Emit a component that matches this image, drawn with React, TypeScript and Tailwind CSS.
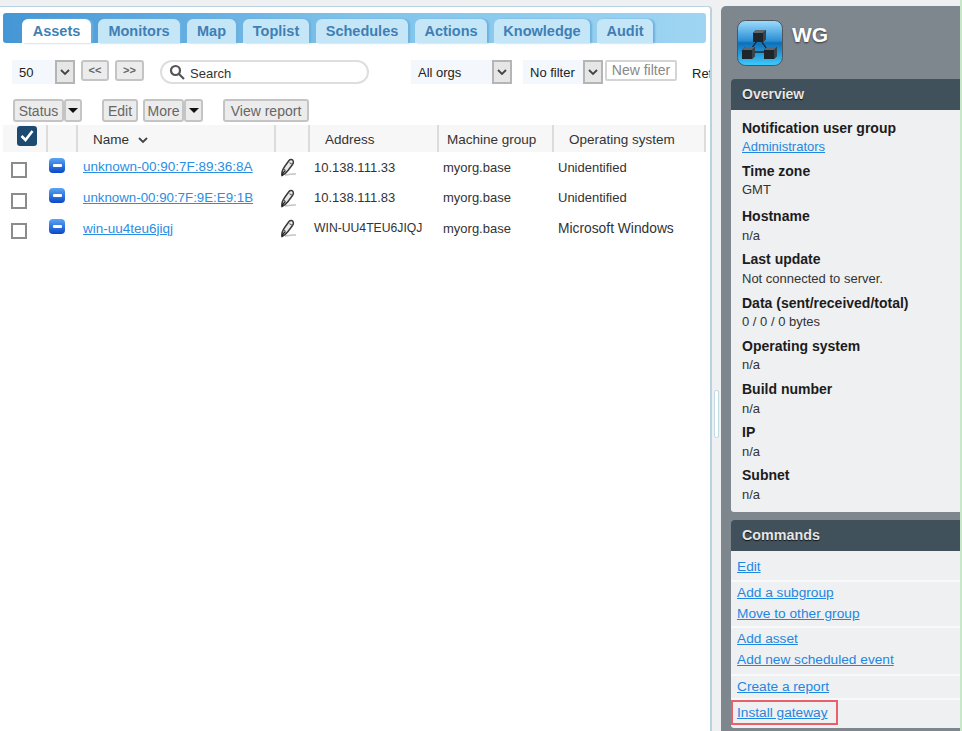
import React from "react";

const tabs = [
  { label: "Assets", w: "w-[69px]", active: true },
  { label: "Monitors", w: "w-[82px]" },
  { label: "Map", w: "w-[49px]" },
  { label: "Toplist", w: "w-[66px]" },
  { label: "Schedules", w: "w-[92px]" },
  { label: "Actions", w: "w-[72px]" },
  { label: "Knowledge", w: "w-[96px]" },
  { label: "Audit", w: "w-[56px]" },
];

const assets = [
  { name: "unknown-00:90:7F:89:36:8A", nameSize: "text-[13.500px]", address: "10.138.111.33", addrSize: "text-[13px]", os: "Unidentified", osSize: "text-[13px]", rowH: "h-[31px]" },
  { name: "unknown-00:90:7F:9E:E9:1B", nameSize: "text-[13.300px]", address: "10.138.111.83", addrSize: "text-[13px]", os: "Unidentified", osSize: "text-[13px]", rowH: "h-[30px]" },
  { name: "win-uu4teu6jiqj", nameSize: "text-[13.500px] pt-px", address: "WIN-UU4TEU6JIQJ", addrSize: "text-[12.200px]", os: "Microsoft Windows", osSize: "text-[13.800px] pt-px", rowH: "h-[31px]" },
];

const fields = [
  { label: "Notification user group", value: "Administrators", link: true, mt: "mt-[9px]", vm: "mt-px" },
  { label: "Time zone", value: "GMT", mt: "mt-[6px]", vm: "mt-px" },
  { label: "Hostname", value: "n/a", mt: "mt-[8px]", vm: "mt-[2px]" },
  { label: "Last update", value: "Not connected to server.", mt: "mt-[5px]", vm: "mt-[2px]" },
  { label: "Data (sent/received/total)", value: "0 / 0 / 0 bytes", mt: "mt-[6px]", vm: "mt-px" },
  { label: "Operating system", value: "n/a", mt: "mt-[6px]", vm: "mt-px" },
  { label: "Build number", value: "n/a", mt: "mt-[6px]", vm: "mt-[2px]" },
  { label: "IP", value: "n/a", mt: "mt-[5px]", vm: "mt-[2px]" },
  { label: "Subnet", value: "n/a", mt: "mt-[5px]", vm: "mt-[2px]" },
];

const Chevron = () => (
  <svg width="10" height="7" viewBox="0 0 10 7" fill="none" stroke="#444" strokeWidth="1.8">
    <path d="M1 1l4 4 4-4" />
  </svg>
);

const Caret = () => (
  <svg width="10" height="5" viewBox="0 0 10 5" fill="#111">
    <path d="M0 0h10L5 5z" />
  </svg>
);

const Pencil = () => (
  <svg width="17" height="19" viewBox="0 0 17 19" fill="none">
    <path d="M5 17c3-.5 6-1.500 11-1" stroke="#c4c4c4" strokeWidth="1.500" />
    <path d="M2 17.500c-.8-3 .5-6 3-9.500l4-5.500c1.200-1.500 3.600-1.200 4.200.4.500 1.300.2 2.300-.7 3.600L8 12.500c-1.500 2-3.500 4-6 5z" fill="#e9e9e9" stroke="#3a3a3a" strokeWidth="1.500" />
    <path d="M9.500 4.500c.8 1 1.800 1.600 3 1.700M3.500 11c1 .3 1.800 1 2 2.300" stroke="#555" strokeWidth="1.100" />
    <path d="M2 17.500c.5-2 1.500-3.500 3-4.500" stroke="#222" strokeWidth="1.500" />
  </svg>
);

const StatusIcon = () => (
  <div className="flex h-[15px] w-[16px] items-center justify-center rounded-[4px] bg-gradient-to-b from-[#5aa5f5] to-[#0c47c8]">
    <div className="h-[3px] w-[9px] rounded-[1px] bg-white" />
  </div>
);

const Cube = ({ x, y }: { x: number; y: number }) => (
  <g transform={`translate(${x} ${y})`}>
    <path d="M0 3l3-3h10v9l-3 3H0z" fill="#1f262b" />
    <path d="M0 3l3-3h10l-3 3z" fill="#5d666c" />
    <path d="M10 3l3-3v9l-3 3z" fill="#3a4349" />
  </g>
);

const NetworkIcon = () => (
  <svg width="46" height="46" viewBox="0 0 46 46">
    <defs>
      <linearGradient id="tile" x1="0" y1="0" x2="0" y2="1">
        <stop offset="0" stopColor="#9fdcfd" />
        <stop offset="0.45" stopColor="#2a8fd6" />
        <stop offset="0.5" stopColor="#0f6fb8" />
        <stop offset="1" stopColor="#3fcbfc" />
      </linearGradient>
    </defs>
    <rect x="0.500" y="0.500" width="45" height="45" rx="8" fill="url(#tile)" stroke="#4d555b" />
    <path d="M22 18L12 32h20z" fill="none" stroke="#1d2a33" strokeWidth="1.300" />
    <Cube x={16} y={10} />
    <Cube x={5} y={27} />
    <Cube x={27} y={27} />
  </svg>
);

const Btn = ({ children, className = "" }: { children: React.ReactNode; className?: string }) => (
  <div className={`flex items-center justify-center rounded-[3px] border-2 border-[#c4c4c4] bg-[#ececec] text-[#666] ${className}`}>
    {children}
  </div>
);

const Select = ({ label, inputW }: { label: string; inputW: string }) => (
  <div className="flex h-[24px] bg-[#f4f8fc]">
    <div className={`${inputW} flex items-center pl-[7px] pt-px text-[13px] text-[#222]`}>{label}</div>
    <div className="flex w-[20px] items-center justify-center border-2 border-[#b5b5b5] bg-[#e6e6e6]">
      <Chevron />
    </div>
  </div>
);

const Head = ({ w, label, pl, sep = true, children }: { w: string; label?: string; pl?: string; sep?: boolean; children?: React.ReactNode }) => (
  <div className={`${w} ${pl ?? ""} flex h-full shrink-0 items-center pt-[3px] text-[13.500px] text-[#333] ${sep ? "border-r-2 border-[#dcdcdc]" : ""}`}>
    {label}
    {children}
  </div>
);

const CmdLink = ({ children }: { children: React.ReactNode }) => (
  <a className="block text-[13.700px] leading-[21px] text-[#1f87e0] underline">{children}</a>
);

export default function App() {
  return (
    <div className="flex h-[731px] w-[962px] overflow-hidden bg-[#eef0f1] font-['Liberation_Sans',Arial,sans-serif]">
      {/* Left pane */}
      <div className="mt-[6px] h-[725px] w-[712px] shrink-0 overflow-hidden rounded-tr-[4px] border-t border-r-2 border-[#b9d3e0] bg-white">
        <div className="ml-[3px] mt-[6px] flex h-[30px] w-[703px] items-end rounded-[3px] bg-gradient-to-r from-[#4596d6] via-[#7fc3ea] to-[#9ed5f2] pl-[19px]">
          <div className="flex gap-[7px]">
            {tabs.map((t) => (
              <div
                key={t.label}
                className={`${t.w} flex h-[24px] items-center justify-center rounded-t-[6px] pt-px text-[14.500px] font-bold text-[#3f7fb5] shadow-[2px_0_2px_#6bb0de] ${
                  t.active ? "bg-white" : "bg-[#c5e6f7]"
                }`}
              >
                {t.label}
              </div>
            ))}
          </div>
        </div>

        {/* Filter toolbar */}
        <div className="ml-[12px] mt-[17px] flex h-[24px] w-max items-start">
          <Select label="50" inputW="w-[43px]" />
          <Btn className="ml-[6px] h-[21px] w-[28px] text-[11px] font-bold">&lt;&lt;</Btn>
          <Btn className="ml-[6px] h-[21px] w-[29px] text-[11px] font-bold">&gt;&gt;</Btn>
          <div className="ml-[16px] flex h-[24px] w-[209px] items-center gap-[5px] rounded-full border-2 border-[#dedede] pl-[7px] text-[13px] text-[#333]">
            <svg width="16" height="16" viewBox="0 0 16 16" fill="none" stroke="#555" strokeWidth="2.2">
              <circle cx="6.500" cy="6.500" r="4.500" />
              <path d="M10 10l5 5" />
            </svg>
            <span className="pt-[3px]">Search</span>
          </div>
          <div className="ml-[42px]">
            <Select label="All orgs" inputW="w-[81px]" />
          </div>
          <div className="ml-[11px]">
            <Select label="No filter" inputW="w-[60px]" />
          </div>
          <div className="ml-[2px] flex h-[21px] w-[72px] items-center justify-center rounded-[2px] border-2 border-[#d4d4d4] text-[14px] text-[#888]">
            New filter
          </div>
          <div className="ml-[15px] text-[13px] leading-[28px] text-[#222]">Refresh</div>
        </div>

        {/* Actions toolbar */}
        <div className="ml-[13px] mt-[15px] flex h-[23px] w-max items-center text-[14px]">
          <Btn className="h-full w-[51px] pt-px">Status</Btn>
          <Btn className="h-full w-[18px]"><Caret /></Btn>
          <Btn className="ml-[20px] h-full w-[36px] pt-px">Edit</Btn>
          <Btn className="ml-[5px] h-full w-[41px] pt-px">More</Btn>
          <Btn className="h-full w-[19px]"><Caret /></Btn>
          <Btn className="ml-[20px] h-full w-[86px] pt-px">View report</Btn>
        </div>

        {/* Asset table */}
        <div className="ml-[3px] mt-[3px] flex h-[27px] w-[703px] items-center bg-[#f7f7f7]">
          <Head w="w-[43px]" sep={false} pl="pl-[14px]">
            <div className="mb-[9px] flex h-[20px] w-[20px] items-center justify-center rounded-[3px] bg-[#1d4a70]">
              <svg width="14" height="12" viewBox="0 0 14 12" fill="none" stroke="#fff" strokeWidth="2.600">
                <path d="M1.500 6l4 4 7-9" />
              </svg>
            </div>
          </Head>
          <Head w="w-[32px] border-l-2" />
          <Head w="w-[198px]" pl="pl-[15px]">
            Name
            <span className="ml-[9px]">
              <Chevron />
            </span>
          </Head>
          <Head w="w-[34px]" />
          <Head w="w-[129px]" label="Address" pl="pl-[15px]" />
          <Head w="w-[115px]" label="Machine group" pl="pl-[8px]" />
          <Head w="w-[152px]" label="Operating system" pl="pl-[15px]" />
        </div>
        {assets.map((a) => (
          <div key={a.name} className={`${a.rowH} ml-[3px] flex items-center text-[13px] text-[#333]`}>
            <div className="w-[43px] shrink-0 pl-[8px] pt-[5px]">
              <div className="h-[16px] w-[16px] border-2 border-[#8c8c8c]" />
            </div>
            <div className="w-[32px] shrink-0 pb-[5px] pl-[3px]">
              <StatusIcon />
            </div>
            <a className={`${a.nameSize} w-[197px] shrink-0 pl-[5px] text-[#2b8ee3] underline`}>{a.name}</a>
            <div className="w-[33px] shrink-0 pl-[5px]">
              <Pencil />
            </div>
            <div className={`${a.addrSize} w-[132px] shrink-0 pl-[6px]`}>{a.address}</div>
            <div className="w-[115px] shrink-0 pl-[3px]">myorg.base</div>
            <div className={`${a.osSize} pl-[3px]`}>{a.os}</div>
          </div>
        ))}
      </div>

      {/* Splitter */}
      <div className="w-[9px] shrink-0 pl-[2px] pt-[390px]">
        <div className="h-[48px] w-[5px] rounded-[2px] border border-[#c4dbe6] bg-white" />
      </div>

      {/* Right pane */}
      <div className="mt-[6px] h-[725px] w-[239px] shrink-0 overflow-hidden rounded-tl-[5px] bg-[#7f878e] pl-[10px]">
        <div className="flex h-[73px] pl-[6px] pt-[14px]">
          <NetworkIcon />
          <div className="ml-[9px] mt-[3px] text-[21px] leading-[24px] font-bold text-white [text-shadow:0_1px_2px_#333]">WG</div>
        </div>
        <div className="flex h-[31px] items-center rounded-tl-[4px] bg-[#41515c] pl-[11px] text-[14px] font-bold text-[#e6e6e6] [text-shadow:0_1px_1px_#111]">
          Overview
        </div>
        <div className="flow-root h-[402px] rounded-bl-[3px] bg-[#eef0f2] pl-[11px]">
          {fields.map((f) => (
            <div key={f.label} className={f.mt}>
              <div className="text-[14px] leading-[18px] font-bold text-[#1c1c1c]">{f.label}</div>
              {f.link ? (
                <a className={`${f.vm} block text-[13px] leading-[18px] text-[#1f87e0] underline`}>{f.value}</a>
              ) : (
                <div className={`${f.vm} text-[13px] leading-[18px] text-[#333]`}>{f.value}</div>
              )}
            </div>
          ))}
        </div>
        <div className="mt-[8px] flex h-[31px] items-center rounded-tl-[4px] bg-[#41515c] pl-[11px] text-[14.300px] font-bold text-[#e6e6e6] [text-shadow:0_1px_1px_#111]">
          Commands
        </div>
        <div className="h-[177px] rounded-bl-[3px] bg-[#eef0f2]">
          <div className="border-b-2 border-[#f8f9fa] pb-[3px] pl-[6px] pt-[5px]">
            <CmdLink>Edit</CmdLink>
          </div>
          <div className="border-b-2 border-[#f8f9fa] pb-[2px] pl-[6px]">
            <CmdLink>Add a subgroup</CmdLink>
            <CmdLink>Move to other group</CmdLink>
          </div>
          <div className="border-b-2 border-[#f8f9fa] pb-[4px] pl-[6px]">
            <CmdLink>Add asset</CmdLink>
            <CmdLink>Add new scheduled event</CmdLink>
          </div>
          <div className="border-b-2 border-[#f8f9fa] pb-px pl-[6px]">
            <CmdLink>Create a report</CmdLink>
          </div>
          <div className="w-[107px] border-2 border-[#e8606a] pl-[4px]">
            <CmdLink>Install gateway</CmdLink>
          </div>
        </div>
      </div>

      <div className="w-[2px] shrink-0 bg-[#c8e6c8]" />
    </div>
  );
}
